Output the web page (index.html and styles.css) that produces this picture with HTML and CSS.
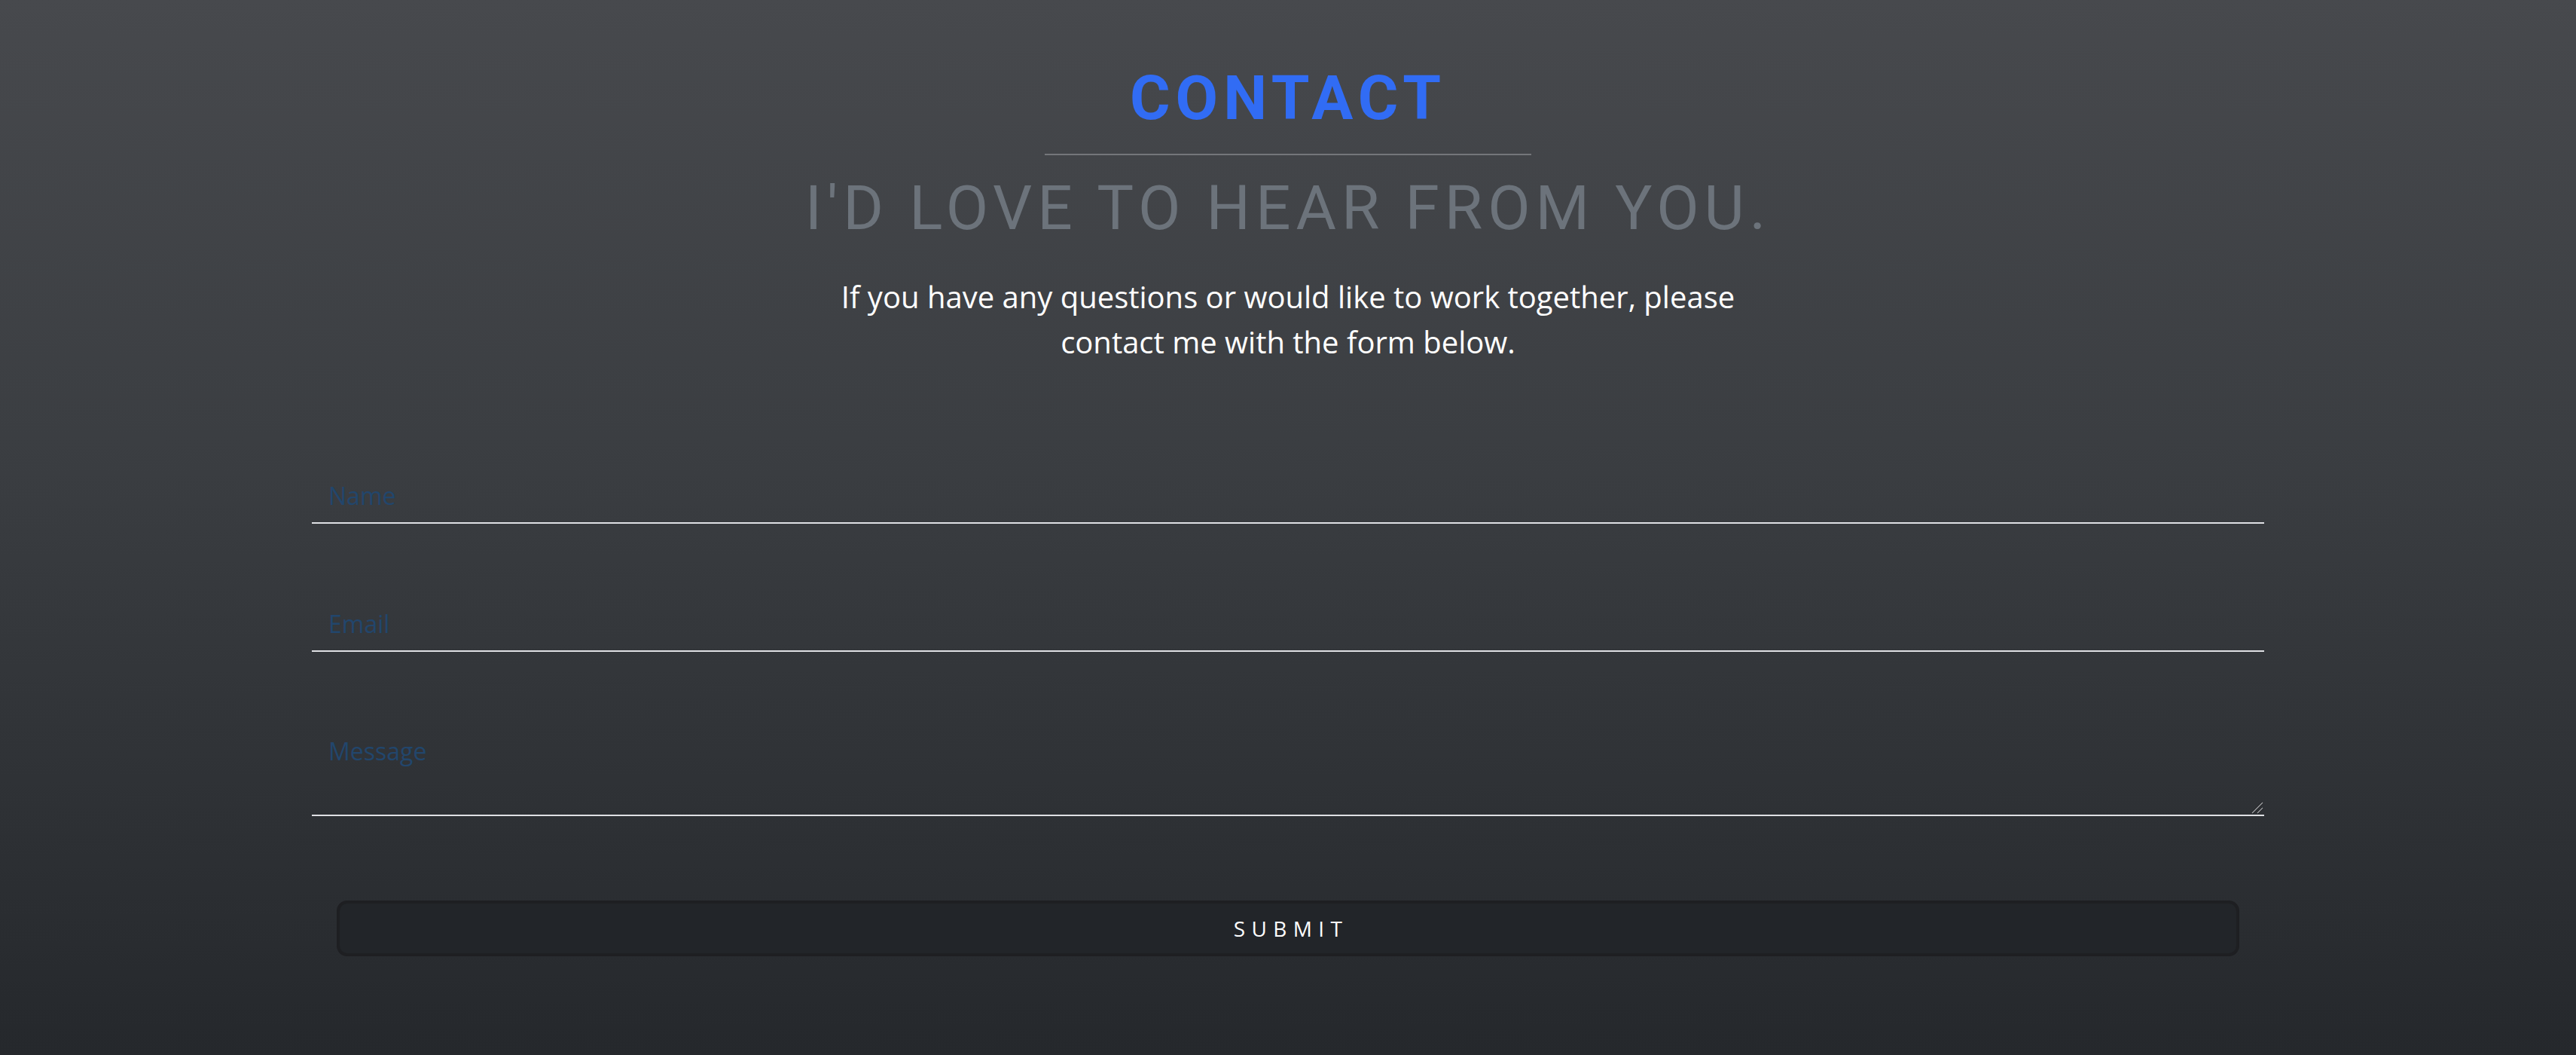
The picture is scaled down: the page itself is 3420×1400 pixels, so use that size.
FILE: index.html
```html
<!DOCTYPE html>
<html lang="en">
<head>
<meta charset="utf-8">
<title>Contact</title>
<link rel="stylesheet" href="styles.css">
</head>
<body>
<section class="contact">
  <h2 class="contact-title">CONTACT</h2>
  <hr class="contact-rule">
  <h3 class="contact-subtitle">I'D LOVE TO HEAR FROM YOU.</h3>
  <p class="contact-intro">If you have any questions or would like to work together, please contact me with the form below.</p>
  <form class="contact-form">
    <input class="field field-input" type="text" placeholder="Name">
    <input class="field field-input" type="email" placeholder="Email">
    <div class="textarea-wrap">
      <textarea class="field field-textarea" placeholder="Message"></textarea>
      <svg class="resize-grip" width="16" height="16" viewBox="0 0 16 16" aria-hidden="true">
        <path d="M1 15 L15 1" stroke="#1b1c1e" stroke-width="3"/>
        <path d="M8 15 L15 8" stroke="#1b1c1e" stroke-width="3"/>
        <path d="M1 15 L15 1" stroke="#a0a2a6" stroke-width="1.4"/>
        <path d="M8 15 L15 8" stroke="#a0a2a6" stroke-width="1.4"/>
      </svg>
    </div>
    <button class="submit-btn" type="button">SUBMIT</button>
  </form>
</section>
</body>
</html>
```
FILE: styles.css
```css
html, body {
  margin: 0;
  padding: 0;
}
body {
  width: 3420px;
  height: 1400px;
  overflow: hidden;
  background: linear-gradient(180deg, #47494d 0%, #3a3d41 45%, #25282c 100%);
  font-family: "Open Sans", "Liberation Sans", sans-serif;
}
.contact {
  display: flex;
  flex-direction: column;
  align-items: center;
  padding-top: 89px;
}
.contact-title {
  margin: 0;
  font-family: Roboto, "Liberation Sans", sans-serif;
  font-weight: 700;
  font-size: 82px;
  line-height: 82px;
  letter-spacing: 7px;
  color: #316cf4;
}
.contact-rule {
  width: 646px;
  height: 0;
  margin: 33px 0 0 0;
  border: none;
  border-top: 2px solid #74767a;
}
.contact-subtitle {
  margin: 29px 0 0 0;
  font-family: Roboto, "Liberation Sans", sans-serif;
  font-weight: 400;
  font-size: 82px;
  line-height: 82px;
  letter-spacing: 6.9px;
  color: #6c737b;
}
.contact-intro {
  margin: 47px 0 0 0;
  width: 1200px;
  font-size: 40px;
  line-height: 60px;
  color: #ffffff;
  text-align: center;
}
.contact-form {
  margin-top: 137px;
  width: 2592px;
  display: flex;
  flex-direction: column;
  align-items: center;
}
.field {
  display: block;
  width: 100%;
  box-sizing: border-box;
  background: transparent;
  border: none;
  border-bottom: 2px solid #dfe0e4;
  outline: none;
  font-family: "Open Sans", "Liberation Sans", sans-serif;
  font-size: 32px;
  color: #ffffff;
  padding: 0 22px;
  margin: 0;
}
.field::placeholder {
  color: #22466c;
  opacity: 1;
}
.field-input {
  height: 74px;
}
.field-input + .field,
.field-input + .textarea-wrap {
  margin-top: 96px;
}
.textarea-wrap {
  position: relative;
  width: 100%;
}
.field-textarea {
  height: 122px;
  padding-top: 14px;
  line-height: 44px;
  resize: none;
}
.resize-grip {
  position: absolute;
  right: 1px;
  bottom: 3px;
  display: block;
}
.submit-btn {
  margin-top: 112px;
  width: 2526px;
  height: 74px;
  box-sizing: border-box;
  background: #222529;
  border: 4px solid #1e1f22;
  border-radius: 14px;
  color: #ffffff;
  font-family: "Open Sans", "Liberation Sans", sans-serif;
  font-size: 28px;
  letter-spacing: 8.4px;
  padding: 0 0 0 8px;
  cursor: pointer;
}
```
